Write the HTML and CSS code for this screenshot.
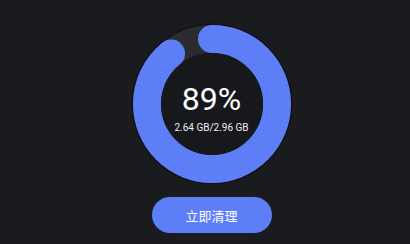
FILE: index.html
```html
<!DOCTYPE html>
<html lang="zh">
<head>
    <meta charset="UTF-8">
    <title>内存清理</title>
    <link rel="stylesheet" href="styles.css">
</head>
<body>
    <div class="panel">
        <div class="gauge">
            <svg class="gauge-ring" width="158" height="158" viewBox="0 0 158 158">
                <circle class="ring-shade" cx="79" cy="79" r="65"></circle>
                <circle class="ring-track" cx="79" cy="79" r="65"></circle>
                <circle class="ring-bar" cx="79" cy="79" r="65"
                        stroke-dasharray="363.5 408.4" transform="rotate(-90 79 79)"></circle>
                <circle class="ring-hole" cx="79" cy="79" r="51"></circle>
            </svg>
            <div class="gauge-text">
                <div class="gauge-value">89%</div>
                <div class="gauge-detail">2.64 GB/2.96 GB</div>
            </div>
        </div>
        <button class="clean-btn">立即清理</button>
    </div>
</body>
</html>
```

FILE: styles.css
```css
html, body {
    margin: 0;
    background: #1a1b1f;
}
.panel {
    display: flex;
    flex-direction: column;
    align-items: center;
    padding: 25px 0 0 13px;
    font-family: Roboto, "Noto Sans CJK SC", sans-serif;
}
.gauge {
    display: grid;
    width: 158px;
    height: 158px;
}
.gauge-ring, .gauge-text {
    grid-area: 1 / 1;
}
.gauge-ring {
    overflow: visible;
}
.ring-shade {
    fill: none;
    stroke: #111215;
    stroke-width: 31;
}
.ring-track {
    fill: none;
    stroke: #2b2c30;
    stroke-width: 28;
}
.ring-bar {
    fill: none;
    stroke: #5d7ef7;
    stroke-width: 28;
    stroke-linecap: round;
}
.ring-hole {
    fill: #17181c;
}
.gauge-text {
    display: flex;
    flex-direction: column;
    align-items: center;
    padding-top: 58px;
    color: #fff;
}
.gauge-value {
    font-size: 32px;
    line-height: 32px;
}
.gauge-detail {
    margin-top: 7px;
    font-size: 10px;
    line-height: 12px;
    color: #eee;
}
.clean-btn {
    margin-top: 14px;
    width: 120px;
    height: 36px;
    border: none;
    border-radius: 18px;
    background: #5d7ef7;
    color: #fff;
    font-family: Roboto, "Noto Sans CJK SC", sans-serif;
    font-size: 13px;
    padding: 0;
}
```
